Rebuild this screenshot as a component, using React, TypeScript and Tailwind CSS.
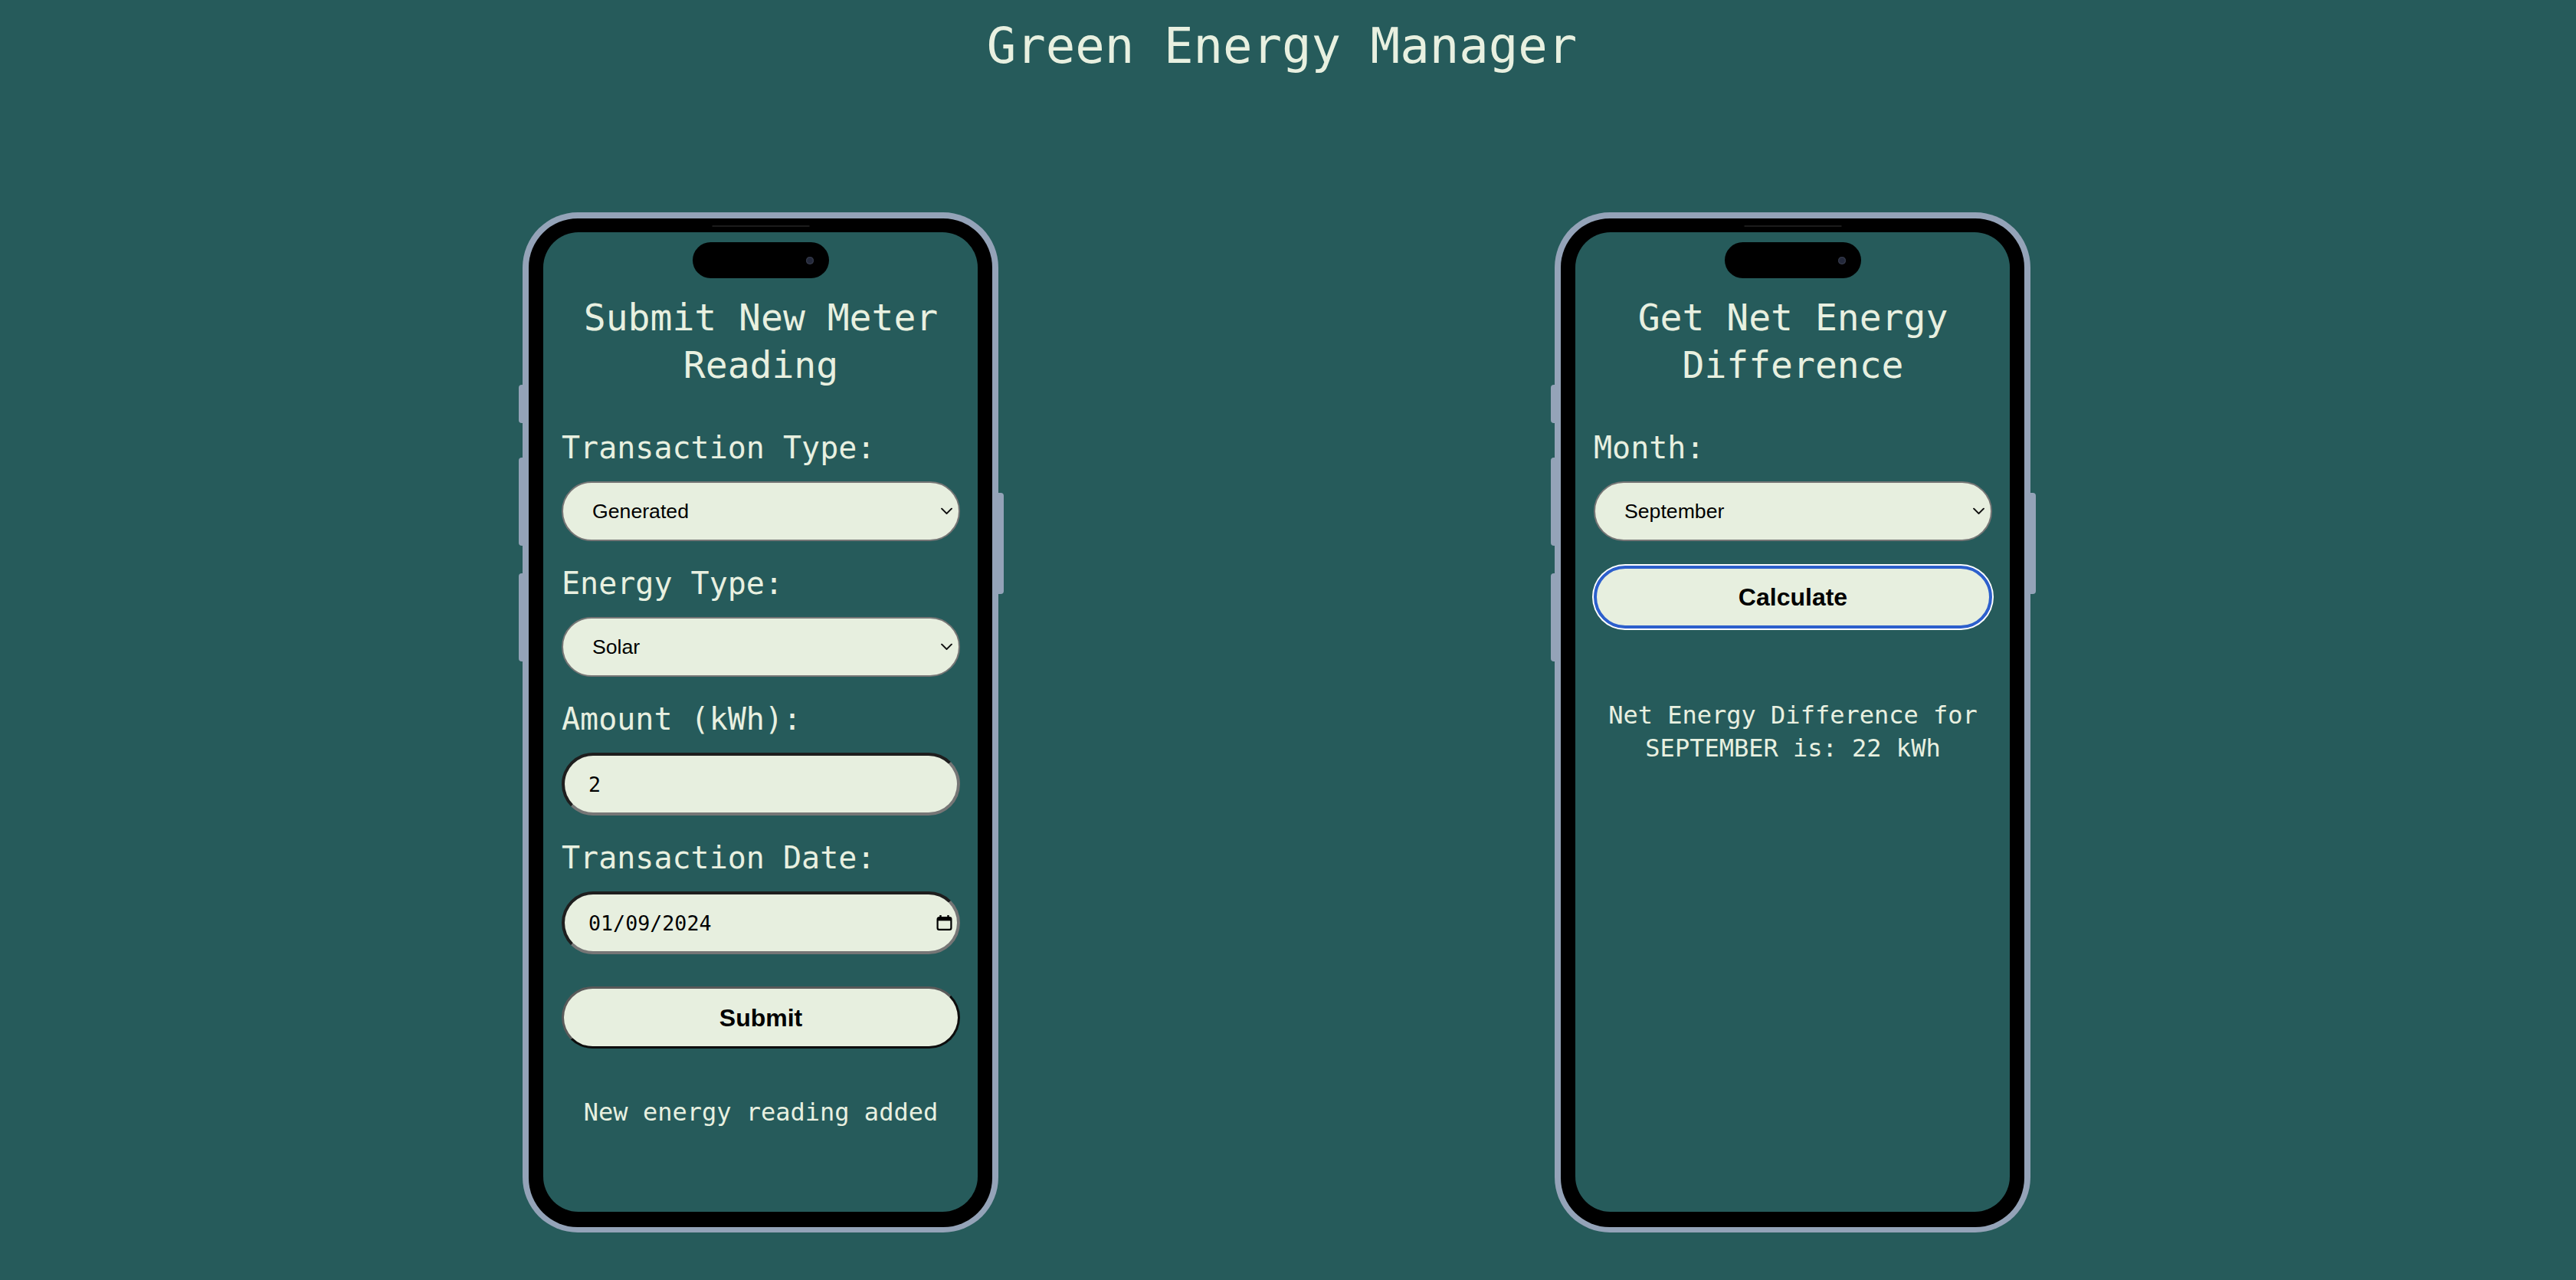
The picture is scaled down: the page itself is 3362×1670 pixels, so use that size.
import React from "react";

const cream = "text-[#e8f0e0]";

function Chevron() {
  return (
    <svg
      className="pointer-events-none absolute right-[10px] top-1/2 -translate-y-1/2"
      width="15"
      height="9"
      viewBox="0 0 15 9"
      fill="none"
    >
      <polyline points="1,1 7.5,7.5 14,1" stroke="#111" strokeWidth="1.8" strokeLinejoin="round" strokeLinecap="round" />
    </svg>
  );
}

function CalendarIcon() {
  return (
    <svg
      className="pointer-events-none absolute right-[10px] top-1/2 -translate-y-1/2"
      width="21"
      height="21"
      viewBox="0 0 21 21"
      fill="none"
    >
      <path d="M5.5 0.5v3.5M15.5 0.5v3.5" stroke="#000" strokeWidth="2.4" />
      <rect x="1.6" y="3.6" width="17.8" height="15.8" rx="2.2" stroke="#000" strokeWidth="2.2" />
      <rect x="1.6" y="3.6" width="17.8" height="4.2" fill="#000" />
    </svg>
  );
}

function Field({ label, children }: { label: string; children: React.ReactNode }) {
  return (
    <div className="flex flex-col gap-[21px]">
      <label className={`block text-[40px] leading-[46px] ${cream}`}>{label}</label>
      {children}
    </div>
  );
}

function Select({ options }: { options: string[] }) {
  return (
    <div className="relative">
      <select className="block h-[78px] w-full appearance-none rounded-full border-2 border-[#767676] bg-[#e7efdf] pl-[38px] font-[family-name:Liberation_Sans,Arial,sans-serif] text-[26.67px] text-black outline-none">
        {options.map((o) => (
          <option key={o}>{o}</option>
        ))}
      </select>
      <Chevron />
    </div>
  );
}

const insetInput =
  "block h-[82px] w-full rounded-full border-4 border-b-[#767676] border-l-[#1e1e1e] border-r-[#767676] border-t-[#1e1e1e] bg-[#e7efdf] pl-[31px] text-[26.67px] text-black outline-none";

function Phone({ title, children }: { title: string; children: React.ReactNode }) {
  return (
    <div className="relative h-[1331px] w-[621px] shrink-0">
      {/* side buttons */}
      <div className="absolute left-[-5px] top-[225px] h-[50px] w-[10px] rounded-l-[4px] bg-[#94a3b8]" />
      <div className="absolute left-[-5px] top-[320px] h-[115px] w-[10px] rounded-l-[4px] bg-[#94a3b8]" />
      <div className="absolute left-[-5px] top-[471px] h-[115px] w-[10px] rounded-l-[4px] bg-[#94a3b8]" />
      <div className="absolute right-[-7px] top-[366px] h-[132px] w-[12px] rounded-r-[4px] bg-[#94a3b8]" />
      <div className="relative flex h-full w-full flex-col rounded-[72px] bg-[#94a3b8] px-[8px] pb-[7px] pt-[8px]">
        <div className="relative flex flex-1 flex-col rounded-[64px] bg-black px-[19px] pb-[20px] pt-[18px]">
          <div className="absolute left-1/2 top-[9px] h-[2px] w-[127px] -translate-x-1/2 bg-[#1b1b1b]" />
          <div className="relative flex flex-1 flex-col rounded-[46px] bg-[#265b5b] pl-[24px] pr-[23px] pt-[80px]">
            <div className="absolute left-1/2 top-[13px] flex h-[47px] w-[178px] -translate-x-1/2 items-center justify-end rounded-full bg-black pr-[20px]">
              <div className="h-[10px] w-[10px] rounded-full bg-[#23283a] shadow-[inset_0_0_2px_#5a6070]" />
            </div>
            <h2 className={`text-center text-[48px] font-normal leading-[62px] ${cream}`}>{title}</h2>
            <div className="mt-[54px] flex flex-col gap-[32px]">{children}</div>
          </div>
        </div>
      </div>
    </div>
  );
}

export default function App() {
  return (
    <div className="min-h-screen w-full bg-[#265b5b] font-[family-name:DejaVu_Sans_Mono,Menlo,monospace]">
      <h1 className={`pr-[16px] pt-[23px] text-center text-[64px] font-normal leading-[74px] ${cream}`}>
        Green Energy Manager
      </h1>
      <div className="mt-[180px] flex justify-center gap-[726px] pr-[30px]">
        <Phone title="Submit New Meter Reading">
          <Field label="Transaction Type:">
            <Select options={["Generated", "Consumed"]} />
          </Field>
          <Field label="Energy Type:">
            <Select options={["Solar", "Wind", "Hydro"]} />
          </Field>
          <Field label="Amount (kWh):">
            <input type="number" defaultValue={2} className={insetInput} />
          </Field>
          <Field label="Transaction Date:">
            <div className="relative">
              <input type="text" readOnly value="01/09/2024" className={insetInput} />
              <CalendarIcon />
            </div>
          </Field>
          <button className="mt-[10px] block h-[81px] w-full rounded-full border-[3px] border-b-[#0d0d0d] border-l-[#5a5a5a] border-r-[#0d0d0d] border-t-[#5a5a5a] bg-[#e7efdf] font-[family-name:Liberation_Sans,Arial,sans-serif] text-[32px] font-bold text-black">
            Submit
          </button>
          <p className={`mt-[30px] text-center text-[32px] leading-[43px] ${cream}`}>New energy reading added</p>
        </Phone>
        <Phone title="Get Net Energy Difference">
          <Field label="Month:">
            <Select options={["September", "October"]} />
          </Field>
          <button className="block h-[82px] w-full rounded-full border-[4px] border-[#2c5fcc] bg-[#e7efdf] font-[family-name:Liberation_Sans,Arial,sans-serif] text-[32px] font-bold text-black shadow-[0_0_0_2px_#ffffff]">
            Calculate
          </button>
          <p className={`mt-[60px] text-center text-[32px] leading-[43px] ${cream}`}>
            Net Energy Difference for SEPTEMBER is: 22 kWh
          </p>
        </Phone>
      </div>
    </div>
  );
}
